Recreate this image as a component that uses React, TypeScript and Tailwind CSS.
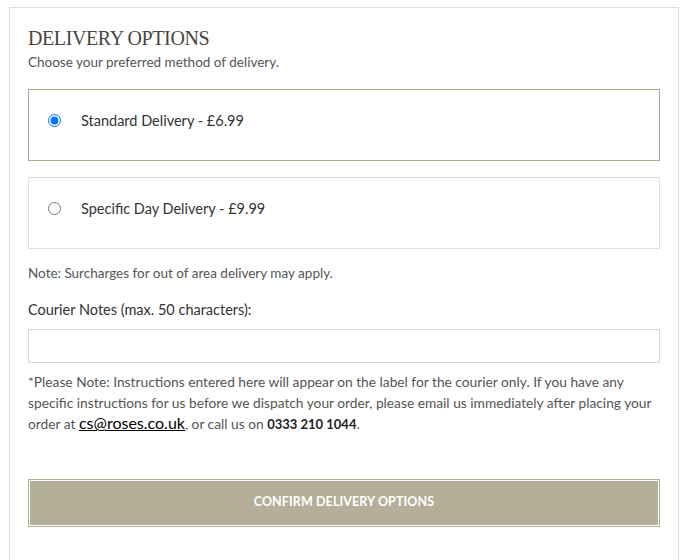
import { useState } from 'react';

const options = [
  { id: 'standard', label: 'Standard Delivery - £6.99' },
  { id: 'specific', label: 'Specific Day Delivery - £9.99' },
];

const App = () => {
  const [selected, setSelected] = useState('standard');
  const [notes, setNotes] = useState('');

  return (
    <div className="min-h-[560px] bg-white pt-[7px] pl-[9px] pr-[17px] font-['Lato','Open_Sans',sans-serif]">
      <div className="min-h-[553px] border-l border-t border-r border-[#dedede] px-[18px] pt-[18px] pb-8">
        <h2 className="font-['Liberation_Serif',serif] text-[20px] leading-[24px] font-normal tracking-[-0.4px] text-[#4a4540]">
          DELIVERY OPTIONS
        </h2>
        <p className="text-[13.5px] leading-[20px] text-[#555] mt-[2px]">Choose your preferred method of delivery.</p>

        <div className="mt-[17px] flex flex-col gap-4">
          {options.map(o => (
            <label
              key={o.id}
              className={`flex h-[72px] items-center border cursor-pointer pl-[19px] pb-[8px] ${selected === o.id ? 'border-[#aea78f]' : 'border-[#dedede]'}`}
            >
              <input
                type="radio"
                name="delivery"
                checked={selected === o.id}
                onChange={() => setSelected(o.id)}
                className="m-0 h-[13px] w-[13px] -mt-[2px]"
              />
              <span className="ml-[20px] text-[14.5px] text-[#333]">{o.label}</span>
            </label>
          ))}
        </div>

        <p className="mt-[15px] text-[13.5px] leading-[18px] text-[#555]">Note: Surcharges for out of area delivery may apply.</p>

        <label htmlFor="courier-notes" className="block mt-[18px] text-[14.5px] leading-[20px] text-[#333]">
          Courier Notes (max. 50 characters):
        </label>
        <input
          id="courier-notes"
          type="text"
          maxLength={50}
          value={notes}
          onChange={e => setNotes(e.target.value)}
          className="mt-[9px] block w-full h-[34px] border border-[#d9d9d9] px-2 text-sm outline-none"
        />

        <p className="mt-[9px] text-[13.75px] leading-[20.5px] text-[#555]">
          *Please Note: Instructions entered here will appear on the label for the courier only. If you have any specific instructions for us before we dispatch your order, please email us immediately after placing your order at{' '}
          <a href="#" className="text-[16px] text-black underline">cs@roses.co.uk</a>, or call us on{' '}
          <span className="font-bold text-[#222] text-[13px]">0333 210 1044</span>.
        </p>

        <button
          type="button"
          className="mt-[44px] block w-full h-[48px] border border-[#b3ad97] p-px bg-white"
        >
          <span className="flex h-full w-full items-center justify-center bg-[#b5ae98] text-[12.5px] font-bold text-white tracking-[0.1px]">
            CONFIRM DELIVERY OPTIONS
          </span>
        </button>
      </div>
    </div>
  );
};

export default App;
